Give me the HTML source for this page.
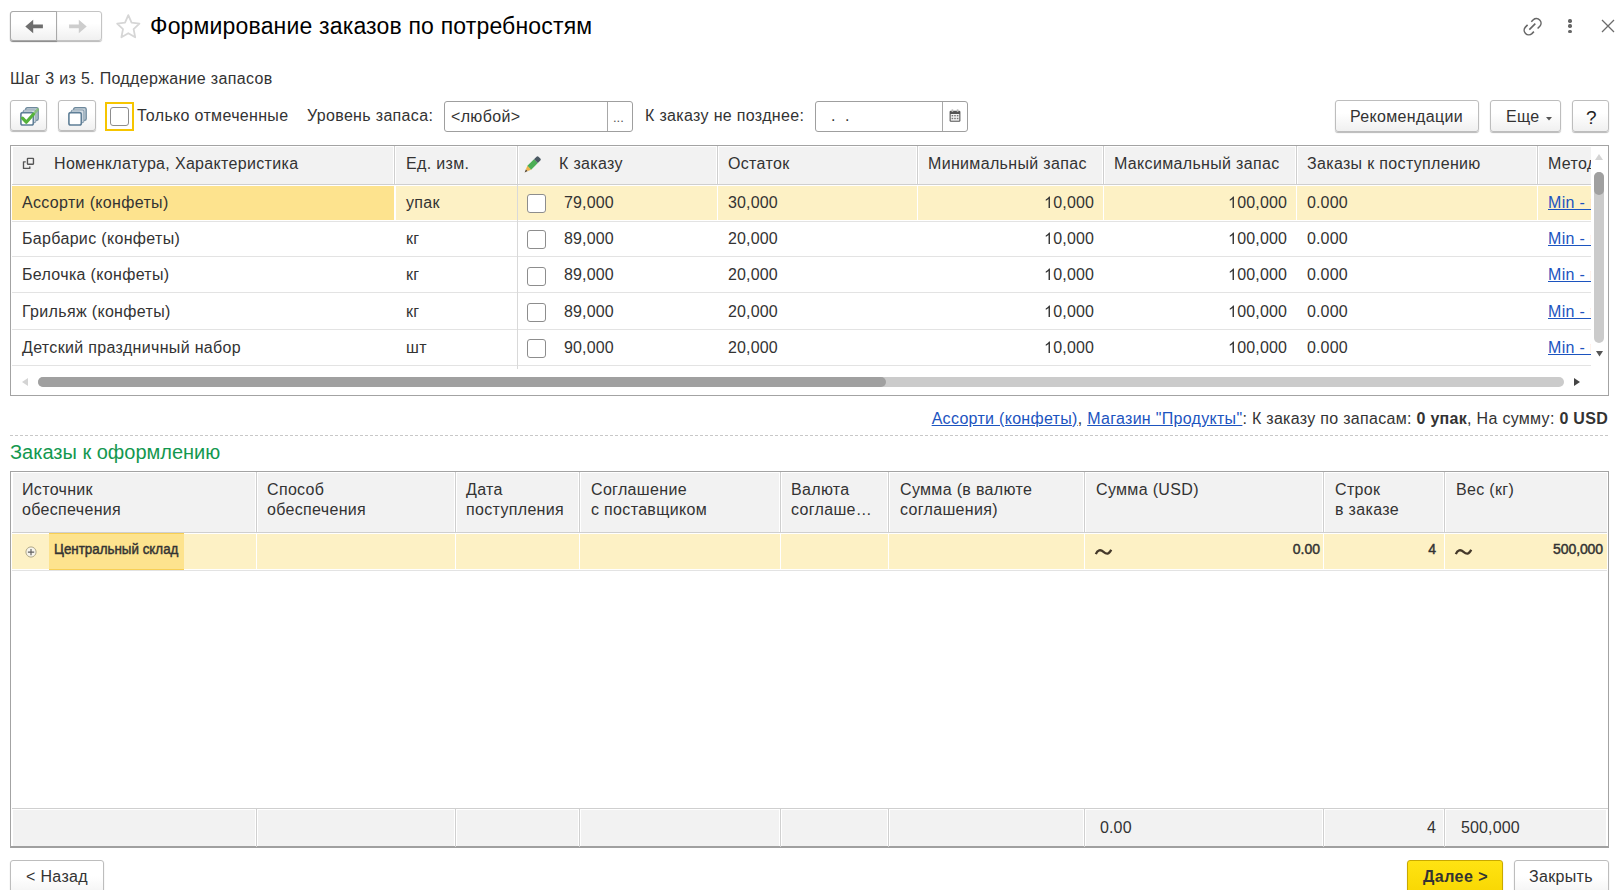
<!DOCTYPE html><html><head><meta charset="utf-8"><style>
*{box-sizing:border-box}
html,body{margin:0;padding:0;background:#fff;width:1622px;height:890px;overflow:hidden}
body{font-family:"Liberation Sans",sans-serif;font-size:16px;color:#333;position:relative}
.a{position:absolute;white-space:nowrap;line-height:20px}
.t{letter-spacing:0.33px}
.n{letter-spacing:0.13px}
.one{display:inline-block;position:relative;width:8.9px;height:20px;vertical-align:top;margin-right:0.13px}
.one svg{left:0;top:0}
.btn{position:absolute;border:1px solid #bdbdbd;border-radius:3px;background:linear-gradient(#fff 40%,#f0f0f0);box-shadow:0 1px 1px rgba(0,0,0,.28)}
.cb{position:absolute;width:19px;height:19px;border:1px solid #8d8d8d;border-radius:3px;background:#fff}
.lnk{color:#1c54bf;text-decoration:underline;text-underline-offset:1px}
svg{position:absolute;overflow:visible}
</style></head><body>
<div class="btn" style="left:10px;top:11px;width:92px;height:30px;border-color:#c4c4c4"></div>
<div class="btn" style="left:10px;top:11px;width:47px;height:30px;border-color:#a9a9a9;border-radius:3px 0 0 3px"></div>
<svg style="left:25px;top:19px" width="18" height="15" viewBox="0 0 18 15"><path d="M0.3 7.4 L8.2 0.7 L8.2 5.6 L17.9 5.6 L17.9 9.3 L8.2 9.3 L8.2 14.2 Z" fill="#6e6e6e"/></svg>
<svg style="left:69px;top:19px" width="18" height="15" viewBox="0 0 18 15"><path d="M17.7 7.4 L9.8 0.7 L9.8 5.6 L0.1 5.6 L0.1 9.3 L9.8 9.3 L9.8 14.2 Z" fill="#cdcdcd"/></svg>
<svg style="left:112px;top:10px" width="32" height="32" viewBox="0 0 32 32"><path d="M16.30 5.20 L19.57 12.71 L27.44 13.63 L21.60 19.19 L23.18 27.27 L16.30 23.20 L9.42 27.27 L11.00 19.19 L5.16 13.63 L13.03 12.71 Z" fill="none" stroke="#d6d6d6" stroke-width="1.8" stroke-linejoin="round"/></svg>
<div class="a " style="left:150px;top:13px;font-size:23px;line-height:26px;color:#000;letter-spacing:0.17px">Формирование заказов по потребностям</div>
<svg style="left:1515px;top:10px" width="35" height="35" viewBox="1515 10 35 35"><g fill="none" stroke="#666" stroke-width="1.55" stroke-linecap="butt"><path d="M1531.3 21.8 L1533.3 19.8 A4.6 4.6 0 0 1 1539.8 26.3 L1537.6 28.5"/><path d="M1533.9 31.6 L1531.9 33.6 A4.6 4.6 0 0 1 1525.4 27.1 L1527.6 24.9"/><path d="M1529.3 29.6 L1535.3 23.6"/></g></svg>
<div style="position:absolute;left:1568.35px;top:19.349999999999998px;width:3.3px;height:3.3px;background:#666;border-radius:50%"></div>
<div style="position:absolute;left:1568.35px;top:24.45px;width:3.3px;height:3.3px;background:#666;border-radius:50%"></div>
<div style="position:absolute;left:1568.35px;top:29.549999999999997px;width:3.3px;height:3.3px;background:#666;border-radius:50%"></div>
<svg style="left:1601px;top:19px" width="14" height="14" viewBox="0 0 14 14"><path d="M1 1 L13 13 M13 1 L1 13" stroke="#6b6b6b" stroke-width="1.3"/></svg>
<div class="a t" style="left:10px;top:69px;">Шаг 3 из 5. Поддержание запасов</div>
<div class="btn" style="left:10px;top:100px;width:37px;height:31px"></div>
<div class="btn" style="left:58px;top:100px;width:38px;height:31px"></div>
<svg style="left:20px;top:107px" width="22" height="22" viewBox="0 0 22 22"><rect x="5.6" y="0.7" width="12.6" height="12.6" rx="1.6" fill="#c4d0d9" stroke="#6d889c" stroke-width="1.3"/><rect x="3.3" y="3.0" width="12.6" height="12.6" rx="1.6" fill="#d6dee5" stroke="#8ba0b0" stroke-width="1.1"/><rect x="0.9" y="5.6" width="12.4" height="12.4" rx="1.8" fill="#fff" stroke="#5f7f97" stroke-width="1.6"/><path d="M13 7.6 L17.8 2.4" fill="none" stroke="#7fc06c" stroke-width="2.6" stroke-linecap="round" opacity="0.75"/><path d="M2.5 11.2 L6.3 15.2 L13.4 7.2" fill="none" stroke="#55b23a" stroke-width="3.2" stroke-linejoin="round" stroke-linecap="round"/></svg>
<svg style="left:68px;top:107px" width="22" height="22" viewBox="0 0 22 22"><rect x="5.6" y="0.7" width="12.6" height="12.6" rx="1.6" fill="#c4d0d9" stroke="#6d889c" stroke-width="1.3"/><rect x="3.3" y="3.0" width="12.6" height="12.6" rx="1.6" fill="#d6dee5" stroke="#8ba0b0" stroke-width="1.1"/><rect x="0.9" y="5.6" width="12.4" height="12.4" rx="1.8" fill="#fff" stroke="#5f7f97" stroke-width="1.6"/></svg>
<div style="position:absolute;left:105px;top:102px;width:29px;height:29px;border:2px solid #f6c500"></div>
<div class="cb" style="left:110px;top:107px;width:19px;height:19px"></div>
<div class="a t" style="left:137px;top:106px;">Только отмеченные</div>
<div class="a t" style="left:307px;top:106px;">Уровень запаса:</div>
<div style="position:absolute;left:444px;top:101px;width:189px;height:31px;border:1px solid #9f9f9f;border-radius:3px"></div>
<div style="position:absolute;left:607px;top:102px;width:1px;height:29px;background:#a8a8a8"></div>
<div class="a t" style="left:451px;top:107px;">&lt;любой&gt;</div>
<div class="a " style="left:613px;top:108px;font-size:13px;color:#555">...</div>
<div class="a t" style="left:645px;top:106px;">К заказу не позднее:</div>
<div style="position:absolute;left:815px;top:101px;width:153px;height:31px;border:1px solid #9f9f9f;border-radius:3px"></div>
<div style="position:absolute;left:942px;top:102px;width:1px;height:29px;background:#a8a8a8"></div>
<div class="a " style="left:831px;top:106px;">.</div>
<div class="a " style="left:845px;top:106px;">.</div>
<svg style="left:949px;top:109px" width="12" height="14" viewBox="0 0 12 14"><rect x="0.6" y="1.8" width="10.8" height="11" rx="1.2" fill="#555"/><rect x="1.7" y="5" width="8.6" height="6.7" fill="#f4f4f4"/><g fill="#777"><rect x="2.6" y="6" width="1.6" height="1.4"/><rect x="5.2" y="6" width="1.6" height="1.4"/><rect x="7.8" y="6" width="1.6" height="1.4"/><rect x="2.6" y="8.8" width="1.6" height="1.4"/><rect x="5.2" y="8.8" width="1.6" height="1.4"/><rect x="7.8" y="8.8" width="1.6" height="1.4"/></g><rect x="2.6" y="0.3" width="1.6" height="2.6" fill="#bbb"/><rect x="7.8" y="0.3" width="1.6" height="2.6" fill="#bbb"/></svg>
<div class="btn" style="left:1335px;top:100px;width:144px;height:32px"></div>
<div class="a t" style="left:1350px;top:107px;">Рекомендации</div>
<div class="btn" style="left:1490px;top:100px;width:71px;height:32px"></div>
<div class="a t" style="left:1506px;top:107px;">Еще</div>
<svg style="left:1546px;top:117px" width="6" height="4" viewBox="0 0 6 4"><path d="M0 0 L6 0 L3 3.5 Z" fill="#555"/></svg>
<div class="btn" style="left:1572px;top:100px;width:37px;height:32px"></div>
<div class="a " style="left:1586px;top:108px;font-size:19px;color:#222">?</div>
<div style="position:absolute;left:10px;top:145px;width:1599px;height:251px;border:1px solid #a3a3a3"></div>
<div style="position:absolute;left:13px;top:147px;width:1578px;height:37px;background:#f2f2f2"></div>
<div style="position:absolute;left:393px;top:146px;width:3px;height:38px;background:#fff"></div>
<div style="position:absolute;left:394px;top:146px;width:1px;height:38px;background:#cfcfcf"></div>
<div style="position:absolute;left:516px;top:146px;width:3px;height:38px;background:#fff"></div>
<div style="position:absolute;left:517px;top:146px;width:1px;height:38px;background:#cfcfcf"></div>
<div style="position:absolute;left:716px;top:146px;width:3px;height:38px;background:#fff"></div>
<div style="position:absolute;left:717px;top:146px;width:1px;height:38px;background:#cfcfcf"></div>
<div style="position:absolute;left:916px;top:146px;width:3px;height:38px;background:#fff"></div>
<div style="position:absolute;left:917px;top:146px;width:1px;height:38px;background:#cfcfcf"></div>
<div style="position:absolute;left:1102px;top:146px;width:3px;height:38px;background:#fff"></div>
<div style="position:absolute;left:1103px;top:146px;width:1px;height:38px;background:#cfcfcf"></div>
<div style="position:absolute;left:1295px;top:146px;width:3px;height:38px;background:#fff"></div>
<div style="position:absolute;left:1296px;top:146px;width:1px;height:38px;background:#cfcfcf"></div>
<div style="position:absolute;left:1536px;top:146px;width:3px;height:38px;background:#fff"></div>
<div style="position:absolute;left:1537px;top:146px;width:1px;height:38px;background:#cfcfcf"></div>
<div style="position:absolute;left:12px;top:184px;width:1579px;height:1px;background:#cfcfcf"></div>
<svg style="left:18px;top:152px" width="24" height="22" viewBox="0 0 24 22"><g fill="none" stroke="#555" stroke-width="1.35" stroke-linejoin="round" stroke-linecap="round"><rect x="9.45" y="6.35" width="6.0" height="5.9" rx="0.4"/><path d="M7.3 9.8 H5.5 V16.4 H11.8 V14.8"/></g></svg>
<div class="a t" style="left:54px;top:154px;">Номенклатура, Характеристика</div>
<div class="a t" style="left:406px;top:154px;">Ед. изм.</div>
<svg style="left:515px;top:150px" width="40" height="40" viewBox="515 150 40 40"><g transform="translate(524.6 172.4) rotate(-45)"><path d="M0 0 L3.2 -1.3 L3.2 1.3 Z" fill="#5b4b33"/><path d="M3.2 -1.3 L6.6 -2.7 L6.6 2.7 L3.2 1.3 Z" fill="#efb449"/><rect x="6.6" y="-2.7" width="9.4" height="5.4" fill="#4bae55"/><path d="M16 -2.7 L19.6 -2.7 Q21 -2.7 21 -1.3 L21 1.3 Q21 2.7 19.6 2.7 L16 2.7 Z" fill="#4b5963"/></g></svg>
<div class="a t" style="left:559px;top:154px;">К заказу</div>
<div class="a t" style="left:728px;top:154px;">Остаток</div>
<div class="a t" style="left:928px;top:154px;">Минимальный запас</div>
<div class="a t" style="left:1114px;top:154px;">Максимальный запас</div>
<div class="a t" style="left:1307px;top:154px;">Заказы к поступлению</div>
<div style="position:absolute;left:1538px;top:154px;width:53px;height:22px;overflow:hidden"><div class="a t" style="left:10px;top:0">Метод</div></div>
<div style="position:absolute;left:12px;top:186px;width:382px;height:34px;background:#fde38e"></div>
<div style="position:absolute;left:396px;top:186px;width:1195px;height:34px;background:#fdf1c5"></div>
<div style="position:absolute;left:517px;top:186px;width:1px;height:34px;background:#fff"></div>
<div style="position:absolute;left:717px;top:186px;width:1px;height:34px;background:#fff"></div>
<div style="position:absolute;left:917px;top:186px;width:1px;height:34px;background:#fff"></div>
<div style="position:absolute;left:1103px;top:186px;width:1px;height:34px;background:#fff"></div>
<div style="position:absolute;left:1296px;top:186px;width:1px;height:34px;background:#fff"></div>
<div style="position:absolute;left:1537px;top:186px;width:1px;height:34px;background:#fff"></div>
<div style="position:absolute;left:12px;top:221px;width:1579px;height:1px;background:#e3e3e3"></div>
<div style="position:absolute;left:12px;top:256px;width:1579px;height:1px;background:#e3e3e3"></div>
<div style="position:absolute;left:12px;top:292px;width:1579px;height:1px;background:#e3e3e3"></div>
<div style="position:absolute;left:12px;top:329px;width:1579px;height:1px;background:#e3e3e3"></div>
<div style="position:absolute;left:12px;top:365px;width:1579px;height:1px;background:#e3e3e3"></div>
<div style="position:absolute;left:517px;top:185px;width:1px;height:184px;background:#d9d9d9"></div>
<div class="a t" style="left:22px;top:193px;">Ассорти (конфеты)</div>
<div class="a t" style="left:406px;top:193px;">упак</div>
<div class="cb" style="left:527px;top:194px"></div>
<div class="a n" style="left:564px;top:193px;">79,000</div>
<div class="a n" style="left:728px;top:193px;">30,000</div>
<div class="a n" style="right:528px;top:193px;"><span class="one"><svg width="9" height="20" viewBox="0 0 9 20"><path transform="translate(0 15) scale(0.0078125 -0.0078125)" d="M763 0H583V1147Q518 1085 413 1023T223 930V1104Q373 1175 485 1276T644 1471H763Z" fill="#333"/></svg></span>0,000</div>
<div class="a n" style="right:335px;top:193px;"><span class="one"><svg width="9" height="20" viewBox="0 0 9 20"><path transform="translate(0 15) scale(0.0078125 -0.0078125)" d="M763 0H583V1147Q518 1085 413 1023T223 930V1104Q373 1175 485 1276T644 1471H763Z" fill="#333"/></svg></span>00,000</div>
<div class="a n" style="left:1307px;top:193px;">0.000</div>
<div style="position:absolute;left:1538px;top:193px;width:53px;height:22px;overflow:hidden"><div class="a t lnk" style="left:10px;top:0">Min - max</div></div>
<div class="a t" style="left:22px;top:229px;">Барбарис (конфеты)</div>
<div class="a t" style="left:406px;top:229px;">кг</div>
<div class="cb" style="left:527px;top:230px"></div>
<div class="a n" style="left:564px;top:229px;">89,000</div>
<div class="a n" style="left:728px;top:229px;">20,000</div>
<div class="a n" style="right:528px;top:229px;"><span class="one"><svg width="9" height="20" viewBox="0 0 9 20"><path transform="translate(0 15) scale(0.0078125 -0.0078125)" d="M763 0H583V1147Q518 1085 413 1023T223 930V1104Q373 1175 485 1276T644 1471H763Z" fill="#333"/></svg></span>0,000</div>
<div class="a n" style="right:335px;top:229px;"><span class="one"><svg width="9" height="20" viewBox="0 0 9 20"><path transform="translate(0 15) scale(0.0078125 -0.0078125)" d="M763 0H583V1147Q518 1085 413 1023T223 930V1104Q373 1175 485 1276T644 1471H763Z" fill="#333"/></svg></span>00,000</div>
<div class="a n" style="left:1307px;top:229px;">0.000</div>
<div style="position:absolute;left:1538px;top:229px;width:53px;height:22px;overflow:hidden"><div class="a t lnk" style="left:10px;top:0">Min - max</div></div>
<div class="a t" style="left:22px;top:265px;">Белочка (конфеты)</div>
<div class="a t" style="left:406px;top:265px;">кг</div>
<div class="cb" style="left:527px;top:267px"></div>
<div class="a n" style="left:564px;top:265px;">89,000</div>
<div class="a n" style="left:728px;top:265px;">20,000</div>
<div class="a n" style="right:528px;top:265px;"><span class="one"><svg width="9" height="20" viewBox="0 0 9 20"><path transform="translate(0 15) scale(0.0078125 -0.0078125)" d="M763 0H583V1147Q518 1085 413 1023T223 930V1104Q373 1175 485 1276T644 1471H763Z" fill="#333"/></svg></span>0,000</div>
<div class="a n" style="right:335px;top:265px;"><span class="one"><svg width="9" height="20" viewBox="0 0 9 20"><path transform="translate(0 15) scale(0.0078125 -0.0078125)" d="M763 0H583V1147Q518 1085 413 1023T223 930V1104Q373 1175 485 1276T644 1471H763Z" fill="#333"/></svg></span>00,000</div>
<div class="a n" style="left:1307px;top:265px;">0.000</div>
<div style="position:absolute;left:1538px;top:265px;width:53px;height:22px;overflow:hidden"><div class="a t lnk" style="left:10px;top:0">Min - max</div></div>
<div class="a t" style="left:22px;top:302px;">Грильяж (конфеты)</div>
<div class="a t" style="left:406px;top:302px;">кг</div>
<div class="cb" style="left:527px;top:303px"></div>
<div class="a n" style="left:564px;top:302px;">89,000</div>
<div class="a n" style="left:728px;top:302px;">20,000</div>
<div class="a n" style="right:528px;top:302px;"><span class="one"><svg width="9" height="20" viewBox="0 0 9 20"><path transform="translate(0 15) scale(0.0078125 -0.0078125)" d="M763 0H583V1147Q518 1085 413 1023T223 930V1104Q373 1175 485 1276T644 1471H763Z" fill="#333"/></svg></span>0,000</div>
<div class="a n" style="right:335px;top:302px;"><span class="one"><svg width="9" height="20" viewBox="0 0 9 20"><path transform="translate(0 15) scale(0.0078125 -0.0078125)" d="M763 0H583V1147Q518 1085 413 1023T223 930V1104Q373 1175 485 1276T644 1471H763Z" fill="#333"/></svg></span>00,000</div>
<div class="a n" style="left:1307px;top:302px;">0.000</div>
<div style="position:absolute;left:1538px;top:302px;width:53px;height:22px;overflow:hidden"><div class="a t lnk" style="left:10px;top:0">Min - max</div></div>
<div class="a t" style="left:22px;top:338px;">Детский праздничный набор</div>
<div class="a t" style="left:406px;top:338px;">шт</div>
<div class="cb" style="left:527px;top:339px"></div>
<div class="a n" style="left:564px;top:338px;">90,000</div>
<div class="a n" style="left:728px;top:338px;">20,000</div>
<div class="a n" style="right:528px;top:338px;"><span class="one"><svg width="9" height="20" viewBox="0 0 9 20"><path transform="translate(0 15) scale(0.0078125 -0.0078125)" d="M763 0H583V1147Q518 1085 413 1023T223 930V1104Q373 1175 485 1276T644 1471H763Z" fill="#333"/></svg></span>0,000</div>
<div class="a n" style="right:335px;top:338px;"><span class="one"><svg width="9" height="20" viewBox="0 0 9 20"><path transform="translate(0 15) scale(0.0078125 -0.0078125)" d="M763 0H583V1147Q518 1085 413 1023T223 930V1104Q373 1175 485 1276T644 1471H763Z" fill="#333"/></svg></span>00,000</div>
<div class="a n" style="left:1307px;top:338px;">0.000</div>
<div style="position:absolute;left:1538px;top:338px;width:53px;height:22px;overflow:hidden"><div class="a t lnk" style="left:10px;top:0">Min - max</div></div>
<div style="position:absolute;left:1594px;top:172px;width:10px;height:171px;background:#cbcbcb;border-radius:5px"></div>
<div style="position:absolute;left:1594px;top:172px;width:10px;height:23px;background:#a0a0a0;border-radius:5px"></div>
<svg style="left:1595px;top:154px" width="8" height="6" viewBox="0 0 8 6"><path d="M0 6 L4 0 L8 6 Z" fill="#d4d4d4"/></svg>
<svg style="left:1596px;top:351px" width="7" height="6" viewBox="0 0 7 6"><path d="M0 0 L7 0 L3.5 5.5 Z" fill="#555"/></svg>
<div style="position:absolute;left:38px;top:377px;width:1526px;height:10px;background:#cbcbcb;border-radius:5px"></div>
<div style="position:absolute;left:38px;top:377px;width:848px;height:10px;background:#a0a0a0;border-radius:5px"></div>
<svg style="left:22px;top:378px" width="6" height="8" viewBox="0 0 6 8"><path d="M6 0 L0 4 L6 8 Z" fill="#d4d4d4"/></svg>
<svg style="left:1574px;top:378px" width="6" height="8" viewBox="0 0 6 8"><path d="M0 0 L6 4 L0 8 Z" fill="#444"/></svg>
<div class="a" style="right:14px;top:409px;letter-spacing:0.3px"><span class="lnk">Ассорти (конфеты)</span>, <span class="lnk">Магазин "Продукты"</span>: К заказу по запасам: <b>0 упак</b>, На сумму: <b>0 USD</b></div>
<div style="position:absolute;left:10px;top:435px;width:1599px;height:1px;background-image:linear-gradient(to right,#c8c8c8 3px,transparent 3px);background-size:5px 1px"></div>
<div class="a" style="left:10px;top:441px;font-size:20px;line-height:22px;color:#13984f">Заказы к оформлению</div>
<div style="position:absolute;left:10px;top:471px;width:1599px;height:377px;border:1px solid #a3a3a3;border-bottom:2px solid #a0a0a0"></div>
<div style="position:absolute;left:13px;top:473px;width:1594px;height:59px;background:#f2f2f2"></div>
<div style="position:absolute;left:255px;top:472px;width:3px;height:60px;background:#fff"></div>
<div style="position:absolute;left:256px;top:472px;width:1px;height:60px;background:#cfcfcf"></div>
<div style="position:absolute;left:454px;top:472px;width:3px;height:60px;background:#fff"></div>
<div style="position:absolute;left:455px;top:472px;width:1px;height:60px;background:#cfcfcf"></div>
<div style="position:absolute;left:578px;top:472px;width:3px;height:60px;background:#fff"></div>
<div style="position:absolute;left:579px;top:472px;width:1px;height:60px;background:#cfcfcf"></div>
<div style="position:absolute;left:779px;top:472px;width:3px;height:60px;background:#fff"></div>
<div style="position:absolute;left:780px;top:472px;width:1px;height:60px;background:#cfcfcf"></div>
<div style="position:absolute;left:887px;top:472px;width:3px;height:60px;background:#fff"></div>
<div style="position:absolute;left:888px;top:472px;width:1px;height:60px;background:#cfcfcf"></div>
<div style="position:absolute;left:1083px;top:472px;width:3px;height:60px;background:#fff"></div>
<div style="position:absolute;left:1084px;top:472px;width:1px;height:60px;background:#cfcfcf"></div>
<div style="position:absolute;left:1322px;top:472px;width:3px;height:60px;background:#fff"></div>
<div style="position:absolute;left:1323px;top:472px;width:1px;height:60px;background:#cfcfcf"></div>
<div style="position:absolute;left:1443px;top:472px;width:3px;height:60px;background:#fff"></div>
<div style="position:absolute;left:1444px;top:472px;width:1px;height:60px;background:#cfcfcf"></div>
<div style="position:absolute;left:12px;top:532px;width:1595px;height:1px;background:#cfcfcf"></div>
<div class="a t" style="left:22px;top:480px;line-height:20px">Источник<br>обеспечения</div>
<div class="a t" style="left:267px;top:480px;line-height:20px">Способ<br>обеспечения</div>
<div class="a t" style="left:466px;top:480px;line-height:20px">Дата<br>поступления</div>
<div class="a t" style="left:591px;top:480px;line-height:20px">Соглашение<br>с поставщиком</div>
<div class="a t" style="left:791px;top:480px;line-height:20px">Валюта<br>соглаше…</div>
<div class="a t" style="left:900px;top:480px;line-height:20px">Сумма (в валюте<br>соглашения)</div>
<div class="a t" style="left:1096px;top:480px;line-height:20px">Сумма (USD)</div>
<div class="a t" style="left:1335px;top:480px;line-height:20px">Строк<br>в заказе</div>
<div class="a t" style="left:1456px;top:480px;line-height:20px">Вес (кг)</div>
<div style="position:absolute;left:12px;top:534px;width:1595px;height:35px;background:#fdf1c5"></div>
<div style="position:absolute;left:256px;top:534px;width:1px;height:35px;background:#fff"></div>
<div style="position:absolute;left:455px;top:534px;width:1px;height:35px;background:#fff"></div>
<div style="position:absolute;left:579px;top:534px;width:1px;height:35px;background:#fff"></div>
<div style="position:absolute;left:780px;top:534px;width:1px;height:35px;background:#fff"></div>
<div style="position:absolute;left:888px;top:534px;width:1px;height:35px;background:#fff"></div>
<div style="position:absolute;left:1084px;top:534px;width:1px;height:35px;background:#fff"></div>
<div style="position:absolute;left:1323px;top:534px;width:1px;height:35px;background:#fff"></div>
<div style="position:absolute;left:1444px;top:534px;width:1px;height:35px;background:#fff"></div>
<div style="position:absolute;left:49px;top:533px;width:135px;height:37px;background:#fde38e;border-top:1px solid #f7cf55;border-bottom:1px solid #f7cf55"></div>
<div style="position:absolute;left:12px;top:570px;width:1595px;height:1px;background:#e3e3e3"></div>
<svg style="left:25px;top:545.8px" width="12" height="12" viewBox="0 0 12 12"><circle cx="6" cy="6" r="5.1" fill="#f7f5ec" stroke="#b0a88a" stroke-width="1"/><path d="M6 2.9 V9.3 M2.9 6.1 H9.2" stroke="#5f5f5f" stroke-width="1.15"/></svg>
<div class="a " style="left:54px;top:539px;font-size:14px;-webkit-text-stroke:0.45px #333;transform:scaleX(0.955);transform-origin:0 0;color:#333">Центральный склад</div>
<svg style="left:1095px;top:548px" width="17" height="8" viewBox="0 0 17 8"><path d="M0.8 6.2 C2.5 1.8 5.5 1.2 8.5 3.8 C11.5 6.4 14 6.6 16.2 1.8" fill="none" stroke="#45392a" stroke-width="2.3"/></svg>
<div class="a " style="right:302px;top:539px;font-size:14px;-webkit-text-stroke:0.45px #333">0.00</div>
<div class="a " style="right:186px;top:539px;font-size:14px;-webkit-text-stroke:0.45px #333">4</div>
<svg style="left:1455px;top:548px" width="17" height="8" viewBox="0 0 17 8"><path d="M0.8 6.2 C2.5 1.8 5.5 1.2 8.5 3.8 C11.5 6.4 14 6.6 16.2 1.8" fill="none" stroke="#45392a" stroke-width="2.3"/></svg>
<div class="a " style="right:19px;top:539px;font-size:14px;-webkit-text-stroke:0.45px #333;letter-spacing:-0.1px">500,000</div>
<div style="position:absolute;left:12px;top:808px;width:1596px;height:1px;background:#cfcfcf"></div>
<div style="position:absolute;left:13px;top:810px;width:242px;height:36px;background:#f2f2f2"></div>
<div style="position:absolute;left:258px;top:810px;width:196px;height:36px;background:#f2f2f2"></div>
<div style="position:absolute;left:457px;top:810px;width:121px;height:36px;background:#f2f2f2"></div>
<div style="position:absolute;left:581px;top:810px;width:198px;height:36px;background:#f2f2f2"></div>
<div style="position:absolute;left:782px;top:810px;width:105px;height:36px;background:#f2f2f2"></div>
<div style="position:absolute;left:890px;top:810px;width:193px;height:36px;background:#f2f2f2"></div>
<div style="position:absolute;left:1086px;top:810px;width:236px;height:36px;background:#f2f2f2"></div>
<div style="position:absolute;left:1325px;top:810px;width:118px;height:36px;background:#f2f2f2"></div>
<div style="position:absolute;left:1446px;top:810px;width:160px;height:36px;background:#f2f2f2"></div>
<div style="position:absolute;left:256px;top:808px;width:1px;height:39px;background:#d0d0d0"></div>
<div style="position:absolute;left:455px;top:808px;width:1px;height:39px;background:#d0d0d0"></div>
<div style="position:absolute;left:579px;top:808px;width:1px;height:39px;background:#d0d0d0"></div>
<div style="position:absolute;left:780px;top:808px;width:1px;height:39px;background:#d0d0d0"></div>
<div style="position:absolute;left:888px;top:808px;width:1px;height:39px;background:#d0d0d0"></div>
<div style="position:absolute;left:1084px;top:808px;width:1px;height:39px;background:#d0d0d0"></div>
<div style="position:absolute;left:1323px;top:808px;width:1px;height:39px;background:#d0d0d0"></div>
<div style="position:absolute;left:1444px;top:808px;width:1px;height:39px;background:#d0d0d0"></div>
<div class="a n" style="left:1100px;top:818px;">0.00</div>
<div class="a n" style="right:186px;top:818px;">4</div>
<div class="a n" style="left:1461px;top:818px;">500,000</div>
<div class="btn" style="left:10px;top:860px;width:94px;height:40px"></div>
<div class="a t" style="left:26px;top:867px;">&lt; Назад</div>
<div class="btn" style="left:1407px;top:860px;width:96px;height:40px;background:linear-gradient(#ffe312,#f7d500);border-color:#c9a900"></div>
<div class="a " style="left:1423px;top:867px;font-weight:bold;color:#333;letter-spacing:0.45px">Далее &gt;</div>
<div class="btn" style="left:1514px;top:860px;width:95px;height:40px"></div>
<div class="a t" style="left:1529px;top:867px;">Закрыть</div>
</body></html>
